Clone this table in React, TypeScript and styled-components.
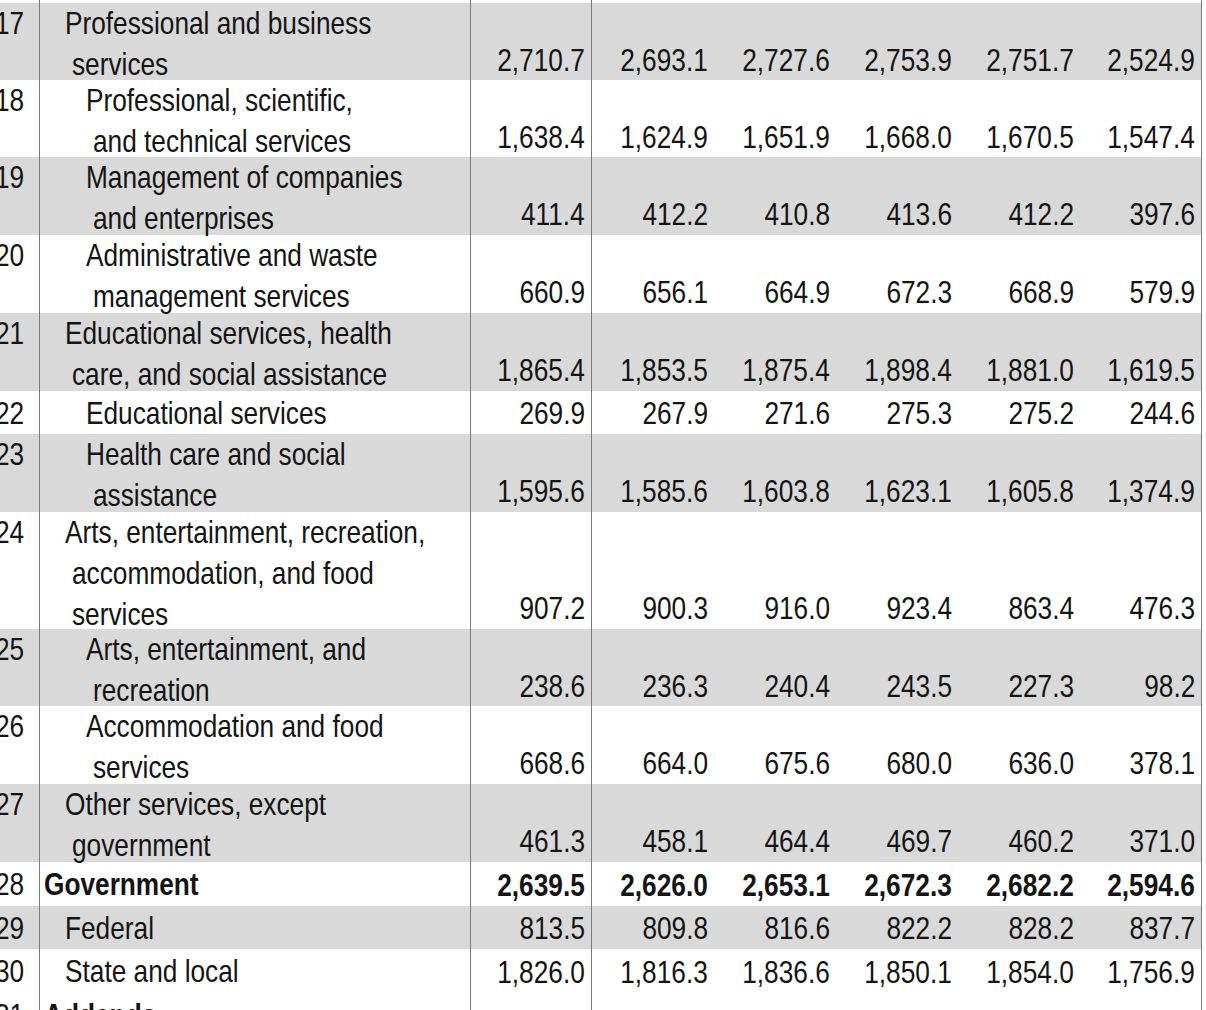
import React from "react";
import styled, { createGlobalStyle } from "styled-components";

const GlobalStyle = createGlobalStyle`
  html, body {
    margin: 0;
    padding: 0;
    background: #ffffff;
    overflow: hidden;
  }
  body {
    font-family: "Liberation Sans Narrow", "Arial Narrow", "Liberation Sans", Arial, sans-serif;
    color: #141414;
  }
`;

type RowData = {
  n: number;
  lines: string[];
  level: number;
  bold?: boolean;
  shaded: boolean;
  height: number;
  values: string[];
};

const rows: RowData[] = [
  { n: 17, lines: ["Professional and business", "services"], level: 1, shaded: true, height: 77, values: ["2,710.7", "2,693.1", "2,727.6", "2,753.9", "2,751.7", "2,524.9"] },
  { n: 18, lines: ["Professional, scientific,", "and technical services"], level: 2, shaded: false, height: 77, values: ["1,638.4", "1,624.9", "1,651.9", "1,668.0", "1,670.5", "1,547.4"] },
  { n: 19, lines: ["Management of companies", "and enterprises"], level: 2, shaded: true, height: 78, values: ["411.4", "412.2", "410.8", "413.6", "412.2", "397.6"] },
  { n: 20, lines: ["Administrative and waste", "management services"], level: 2, shaded: false, height: 78, values: ["660.9", "656.1", "664.9", "672.3", "668.9", "579.9"] },
  { n: 21, lines: ["Educational services, health", "care, and social assistance"], level: 1, shaded: true, height: 78, values: ["1,865.4", "1,853.5", "1,875.4", "1,898.4", "1,881.0", "1,619.5"] },
  { n: 22, lines: ["Educational services"], level: 2, shaded: false, height: 43, values: ["269.9", "267.9", "271.6", "275.3", "275.2", "244.6"] },
  { n: 23, lines: ["Health care and social", "assistance"], level: 2, shaded: true, height: 78, values: ["1,595.6", "1,585.6", "1,603.8", "1,623.1", "1,605.8", "1,374.9"] },
  { n: 24, lines: ["Arts, entertainment, recreation,", "accommodation, and food", "services"], level: 1, shaded: false, height: 117, values: ["907.2", "900.3", "916.0", "923.4", "863.4", "476.3"] },
  { n: 25, lines: ["Arts, entertainment, and", "recreation"], level: 2, shaded: true, height: 77, values: ["238.6", "236.3", "240.4", "243.5", "227.3", "98.2"] },
  { n: 26, lines: ["Accommodation and food", "services"], level: 2, shaded: false, height: 78, values: ["668.6", "664.0", "675.6", "680.0", "636.0", "378.1"] },
  { n: 27, lines: ["Other services, except", "government"], level: 1, shaded: true, height: 78, values: ["461.3", "458.1", "464.4", "469.7", "460.2", "371.0"] },
  { n: 28, lines: ["Government"], level: 0, bold: true, shaded: false, height: 44, values: ["2,639.5", "2,626.0", "2,653.1", "2,672.3", "2,682.2", "2,594.6"] },
  { n: 29, lines: ["Federal"], level: 1, shaded: true, height: 43, values: ["813.5", "809.8", "816.6", "822.2", "828.2", "837.7"] },
  { n: 30, lines: ["State and local"], level: 1, shaded: false, height: 44, values: ["1,826.0", "1,816.3", "1,836.6", "1,850.1", "1,854.0", "1,756.9"] },
];

const LINE = "#7a7a7a";
const SHADE = "#d9d9d9";

const Sheet = styled.div`
  width: 1205px;
  margin-left: -3px;
  display: flex;
  flex-direction: column;
`;

const Row = styled.div<{ $shaded: boolean; $height: number }>`
  display: grid;
  grid-template-columns: 43px 431px 121px 122px 122px 122px 122px 122px;
  height: ${(p) => p.$height}px;
  background: ${(p) => (p.$shaded ? SHADE : "#ffffff")};
  font-size: 32px;
  line-height: 41px;
`;

const TopStub = styled(Row)`
  height: 3px;
`;

/* Arial Narrow is not installed: Liberation Sans compressed to its width */
const Narrow = styled.span<{ $origin: "left" | "right" }>`
  display: inline-block;
  transform: scaleX(0.82);
  transform-origin: ${(p) => p.$origin} center;
  white-space: nowrap;
`;

const NumCell = styled.div<{ $single: boolean }>`
  box-sizing: border-box;
  border-right: 1px solid ${LINE};
  padding-top: ${(p) => (p.$single ? 1.5 : 0)}px;
  margin-left: -2px;
  white-space: nowrap;
  overflow: hidden;
`;

const LabelCell = styled.div<{ $level: number; $bold?: boolean; $single: boolean }>`
  box-sizing: border-box;
  border-right: 1px solid ${LINE};
  padding-top: ${(p) => (p.$single ? 1.5 : 0)}px;
  padding-left: ${(p) => 4 + p.$level * 21}px;
  font-weight: ${(p) => (p.$bold ? 700 : 400)};
  white-space: nowrap;
`;

const LabelLine = styled.div<{ $cont: boolean }>`
  padding-left: ${(p) => (p.$cont ? 7 : 0)}px;
`;

const ValueCell = styled.div<{ $ruled?: boolean; $bold?: boolean; $lift: number }>`
  box-sizing: border-box;
  border-right: ${(p) => (p.$ruled ? `1px solid ${LINE}` : "none")};
  display: flex;
  align-items: flex-end;
  justify-content: flex-end;
  padding-right: 6px;
  padding-bottom: ${(p) => p.$lift}px;
  font-weight: ${(p) => (p.$bold ? 700 : 400)};
  white-space: nowrap;
`;

const EmptyCell = styled.div<{ $ruled?: boolean }>`
  box-sizing: border-box;
  border-right: ${(p) => (p.$ruled ? `1px solid ${LINE}` : "none")};
`;

const ruledCols = [0, 5];
const liftByLines = [0, 0.5, 4.5, 6.5];

function TableRow({ r }: { r: RowData }) {
  const single = r.lines.length === 1;
  return (
    <Row $shaded={r.shaded} $height={r.height}>
      <NumCell $single={single}>
        <Narrow $origin="left">{r.n}</Narrow>
      </NumCell>
      <LabelCell $level={r.level} $bold={r.bold} $single={single}>
        {r.lines.map((l, i) => (
          <LabelLine key={i} $cont={i > 0}>
            <Narrow $origin="left">{l}</Narrow>
          </LabelLine>
        ))}
      </LabelCell>
      {r.values.map((v, i) => (
        <ValueCell key={i} $ruled={ruledCols.includes(i)} $bold={r.bold} $lift={liftByLines[r.lines.length]}>
          <Narrow $origin="right">{v}</Narrow>
        </ValueCell>
      ))}
    </Row>
  );
}

function BlankCells() {
  return (
    <>
      <EmptyCell $ruled />
      <EmptyCell />
      <EmptyCell />
      <EmptyCell />
      <EmptyCell />
      <EmptyCell $ruled />
    </>
  );
}

export default function App() {
  return (
    <>
      <GlobalStyle />
      <Sheet>
        <TopStub $shaded={false} $height={3}>
          <NumCell $single />
          <LabelCell $level={0} $single />
          <BlankCells />
        </TopStub>
        {rows.map((r) => (
          <TableRow key={r.n} r={r} />
        ))}
        <Row $shaded={false} $height={44}>
          <NumCell $single>
            <Narrow $origin="left">31</Narrow>
          </NumCell>
          <LabelCell $level={0} $bold $single>
            <LabelLine $cont={false}>
              <Narrow $origin="left">Addenda:</Narrow>
            </LabelLine>
          </LabelCell>
          <BlankCells />
        </Row>
      </Sheet>
    </>
  );
}
